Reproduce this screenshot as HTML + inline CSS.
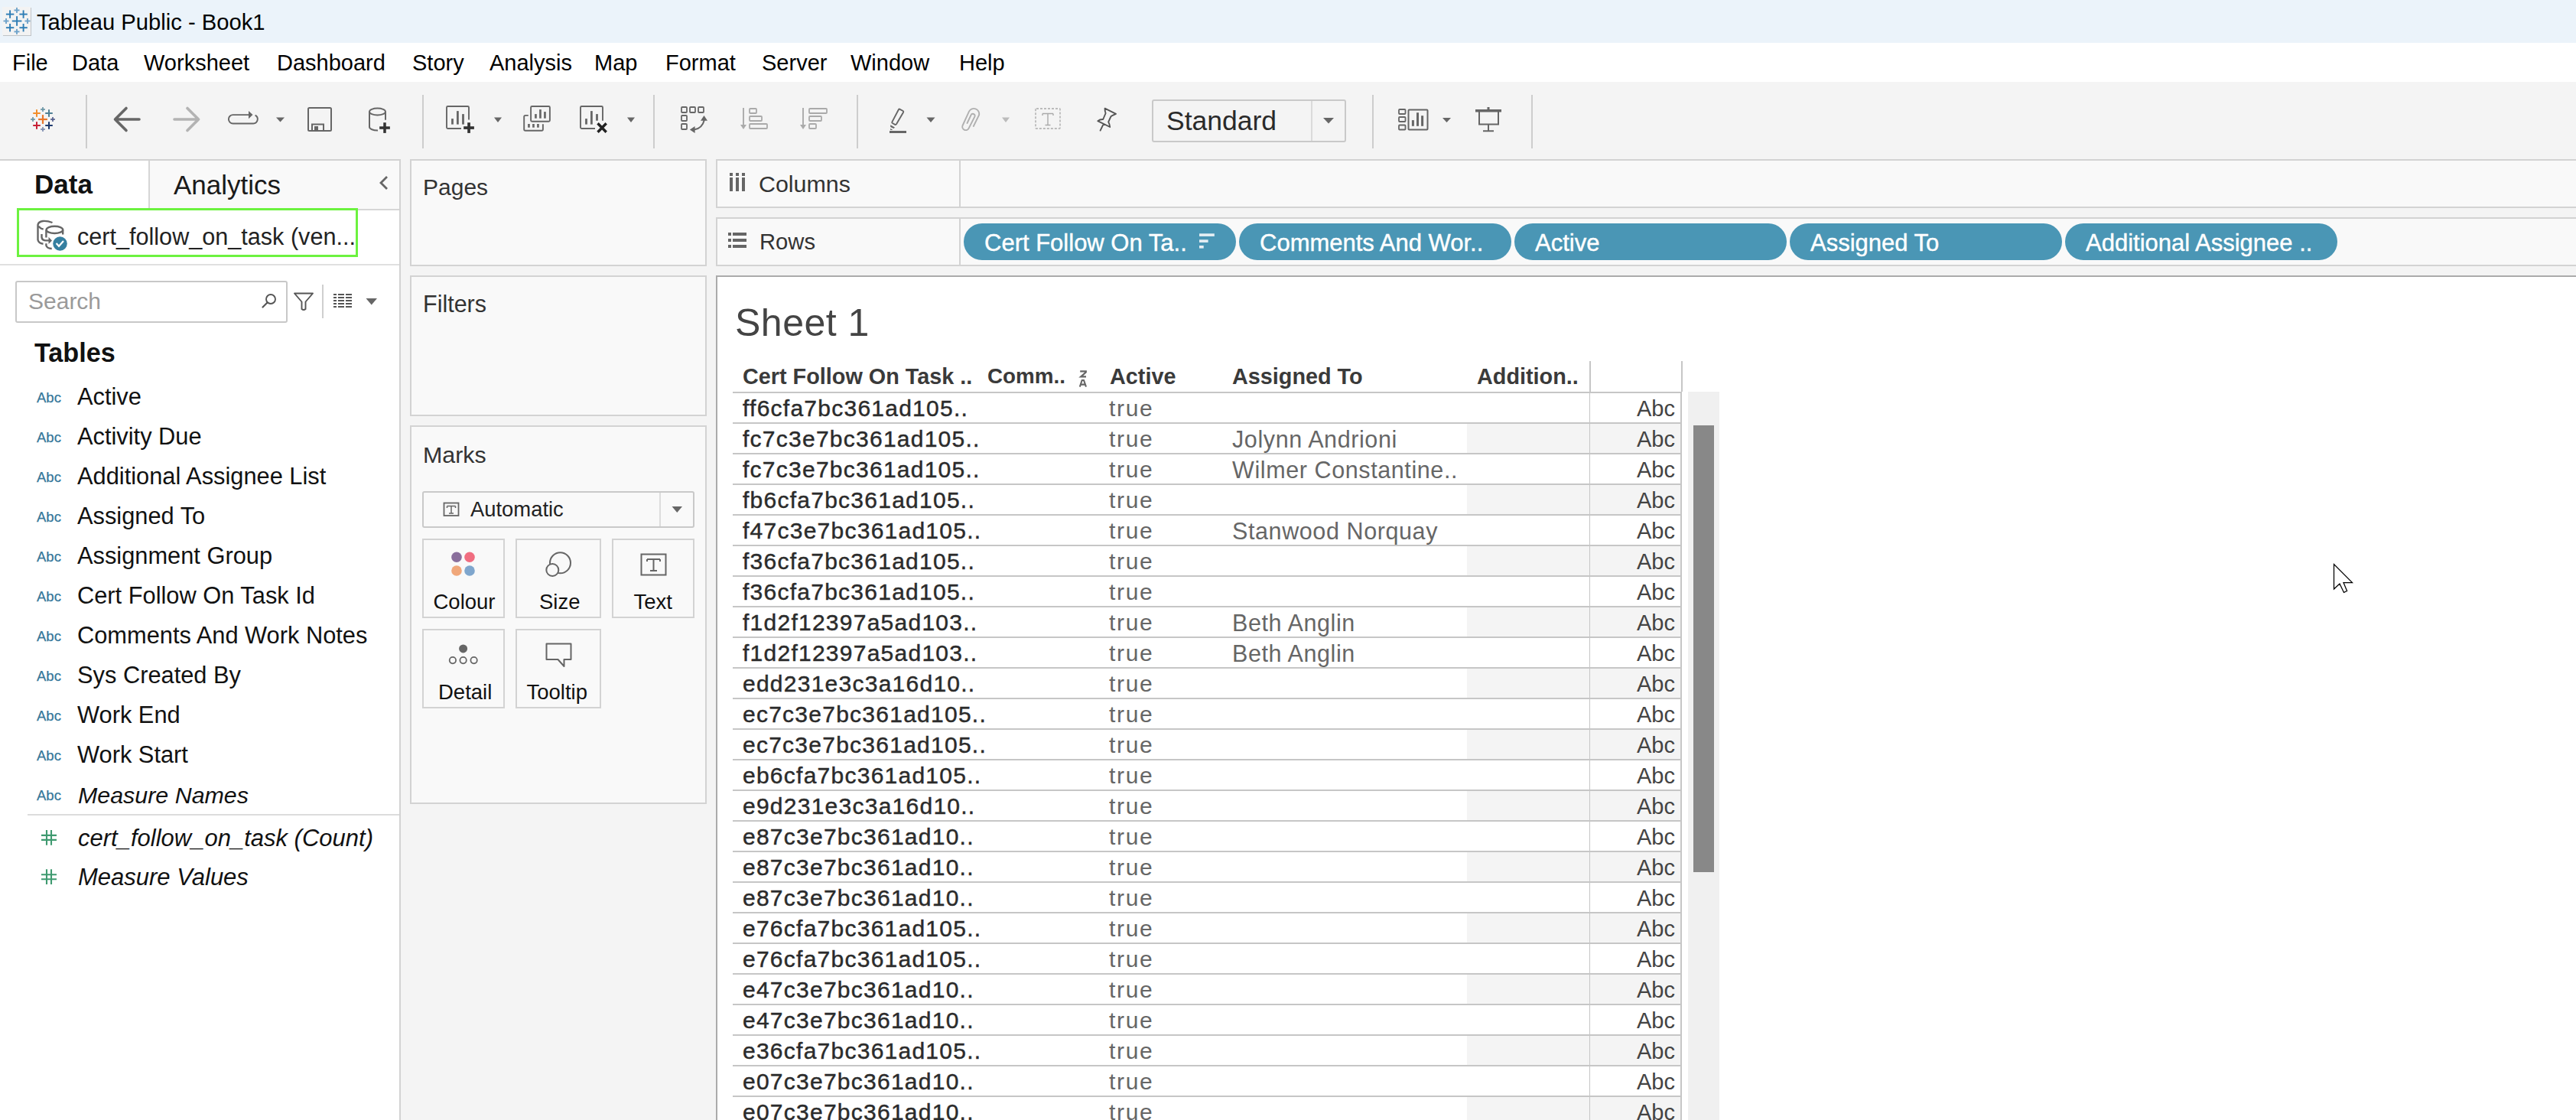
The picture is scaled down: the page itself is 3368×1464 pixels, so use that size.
<!DOCTYPE html>
<html><head><meta charset="utf-8"><style>
html,body{margin:0;padding:0;width:3368px;height:1464px;overflow:hidden;background:#F4F4F4;}
.t{position:absolute;line-height:1;white-space:pre;font-family:"Liberation Sans", sans-serif;}
</style></head><body>
<div style="position:absolute;left:0px;top:0px;width:3368px;height:56px;background:#EBF3FA;"></div><div style="position:absolute;left:0px;top:56px;width:3368px;height:51px;background:#FFFFFF;"></div><div style="position:absolute;left:0px;top:107px;width:3368px;height:1357px;background:#F4F4F4;"></div><div style="position:absolute;left:4px;top:10px;width:37px;height:37px;background:#BFC3C7;"></div><div style="position:absolute;left:3px;top:9px;width:37px;height:37px;background:#F3F3F3;"></div><div class="t" style="top:15.28px;font-size:29.2px;color:#000;left:48px;">Tableau Public - Book1</div><div class="t" style="top:67.95px;font-size:29px;color:#000;left:16px;">File</div><div class="t" style="top:67.95px;font-size:29px;color:#000;left:94px;">Data</div><div class="t" style="top:67.95px;font-size:29px;color:#000;left:188px;">Worksheet</div><div class="t" style="top:67.95px;font-size:29px;color:#000;left:362px;">Dashboard</div><div class="t" style="top:67.95px;font-size:29px;color:#000;left:539px;">Story</div><div class="t" style="top:67.95px;font-size:29px;color:#000;left:640px;">Analysis</div><div class="t" style="top:67.95px;font-size:29px;color:#000;left:777px;">Map</div><div class="t" style="top:67.95px;font-size:29px;color:#000;left:870px;">Format</div><div class="t" style="top:67.95px;font-size:29px;color:#000;left:996px;">Server</div><div class="t" style="top:67.95px;font-size:29px;color:#000;left:1112px;">Window</div><div class="t" style="top:67.95px;font-size:29px;color:#000;left:1254px;">Help</div><div style="position:absolute;left:112px;top:124px;width:2px;height:70px;background:#CDCDCD;"></div><div style="position:absolute;left:552px;top:124px;width:2px;height:70px;background:#CDCDCD;"></div><div style="position:absolute;left:854px;top:124px;width:2px;height:70px;background:#CDCDCD;"></div><div style="position:absolute;left:1120px;top:124px;width:2px;height:70px;background:#CDCDCD;"></div><div style="position:absolute;left:1794px;top:124px;width:2px;height:70px;background:#CDCDCD;"></div><div style="position:absolute;left:2002px;top:124px;width:2px;height:70px;background:#CDCDCD;"></div><div style="position:absolute;left:1506px;top:130px;width:254px;height:56px;background:#F4F4F4;border:2px solid #C9C9C9;box-sizing:border-box;border-radius:3px;"></div><div style="position:absolute;left:1714px;top:132px;width:2px;height:52px;background:#DADADA;"></div><div class="t" style="top:141.15px;font-size:35.5px;color:#2A2A2A;left:1525px;">Standard</div><div style="position:absolute;left:0px;top:208px;width:524px;height:1256px;background:#D2D2D2;"></div><div style="position:absolute;left:0px;top:210px;width:522px;height:1254px;background:#FFFFFF;"></div><div style="position:absolute;left:194px;top:210px;width:328px;height:65px;background:#D6D6D6;"></div><div style="position:absolute;left:196px;top:210px;width:326px;height:63px;background:#F9F9F9;"></div><div class="t" style="top:223.17px;font-size:35px;color:#111;font-weight:700;left:45px;">Data</div><div class="t" style="top:223.67px;font-size:35px;color:#1A1A1A;left:227px;">Analytics</div><div style="position:absolute;left:22px;top:272px;width:446px;height:64px;background:#FFFFFF;border:3px solid #6CF23F;box-sizing:border-box;"></div><div class="t" style="top:294.10px;font-size:30.6px;color:#222;left:101px;">cert_follow_on_task (ven...</div><div style="position:absolute;left:0px;top:345px;width:522px;height:2px;background:#E0E0E0;"></div><div style="position:absolute;left:20px;top:367px;width:356px;height:55px;background:#FFFFFF;border:2px solid #C8C8C8;box-sizing:border-box;border-radius:3px;"></div><div class="t" style="top:378.81px;font-size:30px;color:#9A9A9A;left:37px;">Search</div><div style="position:absolute;left:421px;top:372px;width:2px;height:44px;background:#CFCFCF;"></div><div class="t" style="top:443.65px;font-size:34.2px;color:#111;font-weight:700;left:45px;">Tables</div><div class="t" style="top:511.04px;font-size:18.5px;color:#35779A;left:48px;-webkit-text-stroke:0.25px #35779A;">Abc</div><div class="t" style="top:504.13px;font-size:30.8px;color:#111;left:101px;">Active</div><div class="t" style="top:563.04px;font-size:18.5px;color:#35779A;left:48px;-webkit-text-stroke:0.25px #35779A;">Abc</div><div class="t" style="top:556.13px;font-size:30.8px;color:#111;left:101px;">Activity Due</div><div class="t" style="top:615.04px;font-size:18.5px;color:#35779A;left:48px;-webkit-text-stroke:0.25px #35779A;">Abc</div><div class="t" style="top:608.13px;font-size:30.8px;color:#111;left:101px;">Additional Assignee List</div><div class="t" style="top:667.04px;font-size:18.5px;color:#35779A;left:48px;-webkit-text-stroke:0.25px #35779A;">Abc</div><div class="t" style="top:660.13px;font-size:30.8px;color:#111;left:101px;">Assigned To</div><div class="t" style="top:719.04px;font-size:18.5px;color:#35779A;left:48px;-webkit-text-stroke:0.25px #35779A;">Abc</div><div class="t" style="top:712.13px;font-size:30.8px;color:#111;left:101px;">Assignment Group</div><div class="t" style="top:771.04px;font-size:18.5px;color:#35779A;left:48px;-webkit-text-stroke:0.25px #35779A;">Abc</div><div class="t" style="top:764.13px;font-size:30.8px;color:#111;left:101px;">Cert Follow On Task Id</div><div class="t" style="top:823.04px;font-size:18.5px;color:#35779A;left:48px;-webkit-text-stroke:0.25px #35779A;">Abc</div><div class="t" style="top:816.13px;font-size:30.8px;color:#111;left:101px;">Comments And Work Notes</div><div class="t" style="top:875.04px;font-size:18.5px;color:#35779A;left:48px;-webkit-text-stroke:0.25px #35779A;">Abc</div><div class="t" style="top:868.13px;font-size:30.8px;color:#111;left:101px;">Sys Created By</div><div class="t" style="top:927.04px;font-size:18.5px;color:#35779A;left:48px;-webkit-text-stroke:0.25px #35779A;">Abc</div><div class="t" style="top:920.13px;font-size:30.8px;color:#111;left:101px;">Work End</div><div class="t" style="top:979.04px;font-size:18.5px;color:#35779A;left:48px;-webkit-text-stroke:0.25px #35779A;">Abc</div><div class="t" style="top:972.13px;font-size:30.8px;color:#111;left:101px;">Work Start</div><div class="t" style="top:1030.74px;font-size:18.5px;color:#35779A;left:48px;-webkit-text-stroke:0.25px #35779A;">Abc</div><div class="t" style="top:1024.17px;font-size:30.4px;color:#111;font-style:italic;left:102px;">Measure Names</div><div style="position:absolute;left:36px;top:1064px;width:486px;height:2px;background:#DCDCDC;"></div><div class="t" style="top:1079.66px;font-size:31px;color:#111;font-style:italic;left:102px;">cert_follow_on_task (Count)</div><div class="t" style="top:1130.96px;font-size:31px;color:#111;font-style:italic;left:102px;">Measure Values</div><div style="position:absolute;left:536px;top:208px;width:388px;height:140px;background:#F9F9F9;border:2px solid #D3D3D3;box-sizing:border-box;"></div><div class="t" style="top:230.20px;font-size:30px;color:#333;left:553px;">Pages</div><div style="position:absolute;left:536px;top:360px;width:388px;height:184px;background:#F9F9F9;border:2px solid #D3D3D3;box-sizing:border-box;"></div><div class="t" style="top:382.18px;font-size:30.5px;color:#333;left:553px;">Filters</div><div style="position:absolute;left:536px;top:556px;width:388px;height:495px;background:#F9F9F9;border:2px solid #D3D3D3;box-sizing:border-box;"></div><div class="t" style="top:578.67px;font-size:30.4px;color:#333;left:553px;">Marks</div><div style="position:absolute;left:552px;top:642px;width:356px;height:48px;background:#F9F9F9;border:2px solid #C9C9C9;box-sizing:border-box;border-radius:3px;"></div><div style="position:absolute;left:862px;top:644px;width:2px;height:44px;background:#DCDCDC;"></div><div class="t" style="top:652.11px;font-size:27.4px;color:#222;left:615px;">Automatic</div><div style="position:absolute;left:552px;top:704px;width:108px;height:104px;background:#F9F9F9;border:2px solid #D3D3D3;box-sizing:border-box;"></div><div style="position:absolute;left:674px;top:704px;width:112px;height:104px;background:#F9F9F9;border:2px solid #D3D3D3;box-sizing:border-box;"></div><div style="position:absolute;left:800px;top:704px;width:108px;height:104px;background:#F9F9F9;border:2px solid #D3D3D3;box-sizing:border-box;"></div><div style="position:absolute;left:552px;top:822px;width:108px;height:104px;background:#F9F9F9;border:2px solid #D3D3D3;box-sizing:border-box;"></div><div style="position:absolute;left:674px;top:822px;width:112px;height:104px;background:#F9F9F9;border:2px solid #D3D3D3;box-sizing:border-box;"></div><div class="t" style="top:773.22px;font-size:27.5px;color:#111;left:566.5px;">Colour</div><div class="t" style="top:773.22px;font-size:27.5px;color:#111;left:705px;">Size</div><div class="t" style="top:773.22px;font-size:27.5px;color:#111;left:828.5px;">Text</div><div class="t" style="top:890.72px;font-size:27.5px;color:#111;left:573px;">Detail</div><div class="t" style="top:890.72px;font-size:27.5px;color:#111;left:688.5px;">Tooltip</div><div style="position:absolute;left:936px;top:208px;width:2440px;height:64px;background:#F9F9F9;border:2px solid #D3D3D3;box-sizing:border-box;"></div><div style="position:absolute;left:1254px;top:210px;width:2px;height:60px;background:#D3D3D3;"></div><div style="position:absolute;left:936px;top:284px;width:2440px;height:64px;background:#F9F9F9;border:2px solid #D3D3D3;box-sizing:border-box;"></div><div style="position:absolute;left:1254px;top:286px;width:2px;height:60px;background:#D3D3D3;"></div><div class="t" style="top:224.97px;font-size:30.4px;color:#333;left:992px;">Columns</div><div class="t" style="top:302.18px;font-size:29.2px;color:#333;left:993px;">Rows</div><div style="position:absolute;left:1260px;top:292px;width:356px;height:48px;background:#4A96B5;border-radius:24px;"></div><div class="t" style="top:302.26px;font-size:31px;color:#FFFFFF;left:1287px;-webkit-text-stroke:0.4px #FFF;">Cert Follow On Ta..</div><div style="position:absolute;left:1620px;top:292px;width:356px;height:48px;background:#4A96B5;border-radius:24px;"></div><div class="t" style="top:302.26px;font-size:31px;color:#FFFFFF;left:1647px;-webkit-text-stroke:0.4px #FFF;">Comments And Wor..</div><div style="position:absolute;left:1980px;top:292px;width:356px;height:48px;background:#4A96B5;border-radius:24px;"></div><div class="t" style="top:302.26px;font-size:31px;color:#FFFFFF;left:2007px;-webkit-text-stroke:0.4px #FFF;">Active</div><div style="position:absolute;left:2340px;top:292px;width:356px;height:48px;background:#4A96B5;border-radius:24px;"></div><div class="t" style="top:302.26px;font-size:31px;color:#FFFFFF;left:2367px;-webkit-text-stroke:0.4px #FFF;">Assigned To</div><div style="position:absolute;left:2700px;top:292px;width:356px;height:48px;background:#4A96B5;border-radius:24px;"></div><div class="t" style="top:302.26px;font-size:31px;color:#FFFFFF;left:2727px;-webkit-text-stroke:0.4px #FFF;">Additional Assignee ..</div><div style="position:absolute;left:936px;top:360px;width:2432px;height:1104px;background:#ABABAB;"></div><div style="position:absolute;left:938px;top:362px;width:2430px;height:1102px;background:#FFFFFF;"></div><div class="t" style="top:396.68px;font-size:50px;color:#444;letter-spacing:0.5px;left:961px;">Sheet 1</div><div class="t" style="top:477.62px;font-size:28.8px;color:#3A3A3A;font-weight:700;left:971px;">Cert Follow On Task ..</div><div class="t" style="top:478.47px;font-size:27.8px;color:#3A3A3A;font-weight:700;left:1291px;">Comm..</div><div class="t" style="top:477.62px;font-size:28.8px;color:#3A3A3A;font-weight:700;left:1451px;">Active</div><div class="t" style="top:477.62px;font-size:28.8px;color:#3A3A3A;font-weight:700;left:1611px;">Assigned To</div><div class="t" style="top:477.62px;font-size:28.8px;color:#3A3A3A;font-weight:700;left:1931px;">Addition..</div><div style="position:absolute;left:2078px;top:472px;width:2px;height:40px;background:#C6C6C6;"></div><div style="position:absolute;left:2198px;top:472px;width:2px;height:40px;background:#C6C6C6;"></div><div class="t" style="top:519.11px;font-size:30px;color:#2B2B2B;letter-spacing:1.25px;left:971px;-webkit-text-stroke:0.45px #2B2B2B;">ff6cfa7bc361ad105..</div><div class="t" style="top:519.11px;font-size:30px;color:#666;letter-spacing:1.7px;left:1450px;">true</div><div class="t" style="top:519.95px;font-size:29px;color:#444;right:1178px;">Abc</div><div style="position:absolute;left:1918px;top:554px;width:160px;height:38px;background:#F4F4F4;"></div><div style="position:absolute;left:2079px;top:554px;width:118px;height:38px;background:#F4F4F4;"></div><div class="t" style="top:559.11px;font-size:30px;color:#2B2B2B;letter-spacing:1.25px;left:971px;-webkit-text-stroke:0.45px #2B2B2B;">fc7c3e7bc361ad105..</div><div class="t" style="top:559.11px;font-size:30px;color:#666;letter-spacing:1.7px;left:1450px;">true</div><div class="t" style="top:558.68px;font-size:30.5px;color:#666;letter-spacing:0.6px;left:1611px;">Jolynn Andrioni</div><div class="t" style="top:559.95px;font-size:29px;color:#444;right:1178px;">Abc</div><div class="t" style="top:599.11px;font-size:30px;color:#2B2B2B;letter-spacing:1.25px;left:971px;-webkit-text-stroke:0.45px #2B2B2B;">fc7c3e7bc361ad105..</div><div class="t" style="top:599.11px;font-size:30px;color:#666;letter-spacing:1.7px;left:1450px;">true</div><div class="t" style="top:598.68px;font-size:30.5px;color:#666;letter-spacing:0.6px;left:1611px;">Wilmer Constantine..</div><div class="t" style="top:599.95px;font-size:29px;color:#444;right:1178px;">Abc</div><div style="position:absolute;left:1918px;top:634px;width:160px;height:38px;background:#F4F4F4;"></div><div style="position:absolute;left:2079px;top:634px;width:118px;height:38px;background:#F4F4F4;"></div><div class="t" style="top:639.11px;font-size:30px;color:#2B2B2B;letter-spacing:1.25px;left:971px;-webkit-text-stroke:0.45px #2B2B2B;">fb6cfa7bc361ad105..</div><div class="t" style="top:639.11px;font-size:30px;color:#666;letter-spacing:1.7px;left:1450px;">true</div><div class="t" style="top:639.95px;font-size:29px;color:#444;right:1178px;">Abc</div><div class="t" style="top:679.11px;font-size:30px;color:#2B2B2B;letter-spacing:1.25px;left:971px;-webkit-text-stroke:0.45px #2B2B2B;">f47c3e7bc361ad105..</div><div class="t" style="top:679.11px;font-size:30px;color:#666;letter-spacing:1.7px;left:1450px;">true</div><div class="t" style="top:678.68px;font-size:30.5px;color:#666;letter-spacing:0.6px;left:1611px;">Stanwood Norquay</div><div class="t" style="top:679.95px;font-size:29px;color:#444;right:1178px;">Abc</div><div style="position:absolute;left:1918px;top:714px;width:160px;height:38px;background:#F4F4F4;"></div><div style="position:absolute;left:2079px;top:714px;width:118px;height:38px;background:#F4F4F4;"></div><div class="t" style="top:719.11px;font-size:30px;color:#2B2B2B;letter-spacing:1.25px;left:971px;-webkit-text-stroke:0.45px #2B2B2B;">f36cfa7bc361ad105..</div><div class="t" style="top:719.11px;font-size:30px;color:#666;letter-spacing:1.7px;left:1450px;">true</div><div class="t" style="top:719.95px;font-size:29px;color:#444;right:1178px;">Abc</div><div class="t" style="top:759.11px;font-size:30px;color:#2B2B2B;letter-spacing:1.25px;left:971px;-webkit-text-stroke:0.45px #2B2B2B;">f36cfa7bc361ad105..</div><div class="t" style="top:759.11px;font-size:30px;color:#666;letter-spacing:1.7px;left:1450px;">true</div><div class="t" style="top:759.95px;font-size:29px;color:#444;right:1178px;">Abc</div><div style="position:absolute;left:1918px;top:794px;width:160px;height:38px;background:#F4F4F4;"></div><div style="position:absolute;left:2079px;top:794px;width:118px;height:38px;background:#F4F4F4;"></div><div class="t" style="top:799.11px;font-size:30px;color:#2B2B2B;letter-spacing:1.25px;left:971px;-webkit-text-stroke:0.45px #2B2B2B;">f1d2f12397a5ad103..</div><div class="t" style="top:799.11px;font-size:30px;color:#666;letter-spacing:1.7px;left:1450px;">true</div><div class="t" style="top:798.68px;font-size:30.5px;color:#666;letter-spacing:0.6px;left:1611px;">Beth Anglin</div><div class="t" style="top:799.95px;font-size:29px;color:#444;right:1178px;">Abc</div><div class="t" style="top:839.11px;font-size:30px;color:#2B2B2B;letter-spacing:1.25px;left:971px;-webkit-text-stroke:0.45px #2B2B2B;">f1d2f12397a5ad103..</div><div class="t" style="top:839.11px;font-size:30px;color:#666;letter-spacing:1.7px;left:1450px;">true</div><div class="t" style="top:838.68px;font-size:30.5px;color:#666;letter-spacing:0.6px;left:1611px;">Beth Anglin</div><div class="t" style="top:839.95px;font-size:29px;color:#444;right:1178px;">Abc</div><div style="position:absolute;left:1918px;top:874px;width:160px;height:38px;background:#F4F4F4;"></div><div style="position:absolute;left:2079px;top:874px;width:118px;height:38px;background:#F4F4F4;"></div><div class="t" style="top:879.11px;font-size:30px;color:#2B2B2B;letter-spacing:1.25px;left:971px;-webkit-text-stroke:0.45px #2B2B2B;">edd231e3c3a16d10..</div><div class="t" style="top:879.11px;font-size:30px;color:#666;letter-spacing:1.7px;left:1450px;">true</div><div class="t" style="top:879.95px;font-size:29px;color:#444;right:1178px;">Abc</div><div class="t" style="top:919.11px;font-size:30px;color:#2B2B2B;letter-spacing:1.25px;left:971px;-webkit-text-stroke:0.45px #2B2B2B;">ec7c3e7bc361ad105..</div><div class="t" style="top:919.11px;font-size:30px;color:#666;letter-spacing:1.7px;left:1450px;">true</div><div class="t" style="top:919.95px;font-size:29px;color:#444;right:1178px;">Abc</div><div style="position:absolute;left:1918px;top:954px;width:160px;height:38px;background:#F4F4F4;"></div><div style="position:absolute;left:2079px;top:954px;width:118px;height:38px;background:#F4F4F4;"></div><div class="t" style="top:959.11px;font-size:30px;color:#2B2B2B;letter-spacing:1.25px;left:971px;-webkit-text-stroke:0.45px #2B2B2B;">ec7c3e7bc361ad105..</div><div class="t" style="top:959.11px;font-size:30px;color:#666;letter-spacing:1.7px;left:1450px;">true</div><div class="t" style="top:959.95px;font-size:29px;color:#444;right:1178px;">Abc</div><div class="t" style="top:999.11px;font-size:30px;color:#2B2B2B;letter-spacing:1.25px;left:971px;-webkit-text-stroke:0.45px #2B2B2B;">eb6cfa7bc361ad105..</div><div class="t" style="top:999.11px;font-size:30px;color:#666;letter-spacing:1.7px;left:1450px;">true</div><div class="t" style="top:999.95px;font-size:29px;color:#444;right:1178px;">Abc</div><div style="position:absolute;left:1918px;top:1034px;width:160px;height:38px;background:#F4F4F4;"></div><div style="position:absolute;left:2079px;top:1034px;width:118px;height:38px;background:#F4F4F4;"></div><div class="t" style="top:1039.11px;font-size:30px;color:#2B2B2B;letter-spacing:1.25px;left:971px;-webkit-text-stroke:0.45px #2B2B2B;">e9d231e3c3a16d10..</div><div class="t" style="top:1039.11px;font-size:30px;color:#666;letter-spacing:1.7px;left:1450px;">true</div><div class="t" style="top:1039.95px;font-size:29px;color:#444;right:1178px;">Abc</div><div class="t" style="top:1079.11px;font-size:30px;color:#2B2B2B;letter-spacing:1.25px;left:971px;-webkit-text-stroke:0.45px #2B2B2B;">e87c3e7bc361ad10..</div><div class="t" style="top:1079.11px;font-size:30px;color:#666;letter-spacing:1.7px;left:1450px;">true</div><div class="t" style="top:1079.95px;font-size:29px;color:#444;right:1178px;">Abc</div><div style="position:absolute;left:1918px;top:1114px;width:160px;height:38px;background:#F4F4F4;"></div><div style="position:absolute;left:2079px;top:1114px;width:118px;height:38px;background:#F4F4F4;"></div><div class="t" style="top:1119.11px;font-size:30px;color:#2B2B2B;letter-spacing:1.25px;left:971px;-webkit-text-stroke:0.45px #2B2B2B;">e87c3e7bc361ad10..</div><div class="t" style="top:1119.11px;font-size:30px;color:#666;letter-spacing:1.7px;left:1450px;">true</div><div class="t" style="top:1119.95px;font-size:29px;color:#444;right:1178px;">Abc</div><div class="t" style="top:1159.11px;font-size:30px;color:#2B2B2B;letter-spacing:1.25px;left:971px;-webkit-text-stroke:0.45px #2B2B2B;">e87c3e7bc361ad10..</div><div class="t" style="top:1159.11px;font-size:30px;color:#666;letter-spacing:1.7px;left:1450px;">true</div><div class="t" style="top:1159.95px;font-size:29px;color:#444;right:1178px;">Abc</div><div style="position:absolute;left:1918px;top:1194px;width:160px;height:38px;background:#F4F4F4;"></div><div style="position:absolute;left:2079px;top:1194px;width:118px;height:38px;background:#F4F4F4;"></div><div class="t" style="top:1199.11px;font-size:30px;color:#2B2B2B;letter-spacing:1.25px;left:971px;-webkit-text-stroke:0.45px #2B2B2B;">e76cfa7bc361ad105..</div><div class="t" style="top:1199.11px;font-size:30px;color:#666;letter-spacing:1.7px;left:1450px;">true</div><div class="t" style="top:1199.95px;font-size:29px;color:#444;right:1178px;">Abc</div><div class="t" style="top:1239.11px;font-size:30px;color:#2B2B2B;letter-spacing:1.25px;left:971px;-webkit-text-stroke:0.45px #2B2B2B;">e76cfa7bc361ad105..</div><div class="t" style="top:1239.11px;font-size:30px;color:#666;letter-spacing:1.7px;left:1450px;">true</div><div class="t" style="top:1239.95px;font-size:29px;color:#444;right:1178px;">Abc</div><div style="position:absolute;left:1918px;top:1274px;width:160px;height:38px;background:#F4F4F4;"></div><div style="position:absolute;left:2079px;top:1274px;width:118px;height:38px;background:#F4F4F4;"></div><div class="t" style="top:1279.11px;font-size:30px;color:#2B2B2B;letter-spacing:1.25px;left:971px;-webkit-text-stroke:0.45px #2B2B2B;">e47c3e7bc361ad10..</div><div class="t" style="top:1279.11px;font-size:30px;color:#666;letter-spacing:1.7px;left:1450px;">true</div><div class="t" style="top:1279.95px;font-size:29px;color:#444;right:1178px;">Abc</div><div class="t" style="top:1319.11px;font-size:30px;color:#2B2B2B;letter-spacing:1.25px;left:971px;-webkit-text-stroke:0.45px #2B2B2B;">e47c3e7bc361ad10..</div><div class="t" style="top:1319.11px;font-size:30px;color:#666;letter-spacing:1.7px;left:1450px;">true</div><div class="t" style="top:1319.95px;font-size:29px;color:#444;right:1178px;">Abc</div><div style="position:absolute;left:1918px;top:1354px;width:160px;height:38px;background:#F4F4F4;"></div><div style="position:absolute;left:2079px;top:1354px;width:118px;height:38px;background:#F4F4F4;"></div><div class="t" style="top:1359.11px;font-size:30px;color:#2B2B2B;letter-spacing:1.25px;left:971px;-webkit-text-stroke:0.45px #2B2B2B;">e36cfa7bc361ad105..</div><div class="t" style="top:1359.11px;font-size:30px;color:#666;letter-spacing:1.7px;left:1450px;">true</div><div class="t" style="top:1359.95px;font-size:29px;color:#444;right:1178px;">Abc</div><div class="t" style="top:1399.11px;font-size:30px;color:#2B2B2B;letter-spacing:1.25px;left:971px;-webkit-text-stroke:0.45px #2B2B2B;">e07c3e7bc361ad10..</div><div class="t" style="top:1399.11px;font-size:30px;color:#666;letter-spacing:1.7px;left:1450px;">true</div><div class="t" style="top:1399.95px;font-size:29px;color:#444;right:1178px;">Abc</div><div style="position:absolute;left:1918px;top:1434px;width:160px;height:38px;background:#F4F4F4;"></div><div style="position:absolute;left:2079px;top:1434px;width:118px;height:38px;background:#F4F4F4;"></div><div class="t" style="top:1439.11px;font-size:30px;color:#2B2B2B;letter-spacing:1.25px;left:971px;-webkit-text-stroke:0.45px #2B2B2B;">e07c3e7bc361ad10..</div><div class="t" style="top:1439.11px;font-size:30px;color:#666;letter-spacing:1.7px;left:1450px;">true</div><div class="t" style="top:1439.95px;font-size:29px;color:#444;right:1178px;">Abc</div><div style="position:absolute;left:958px;top:512px;width:1120px;height:2px;background:#C6C6C6;"></div><div style="position:absolute;left:2079px;top:512px;width:118px;height:2px;background:#C6C6C6;"></div><div style="position:absolute;left:958px;top:552px;width:1120px;height:2px;background:#C6C6C6;"></div><div style="position:absolute;left:2079px;top:552px;width:118px;height:2px;background:#C6C6C6;"></div><div style="position:absolute;left:958px;top:592px;width:1120px;height:2px;background:#C6C6C6;"></div><div style="position:absolute;left:2079px;top:592px;width:118px;height:2px;background:#C6C6C6;"></div><div style="position:absolute;left:958px;top:632px;width:1120px;height:2px;background:#C6C6C6;"></div><div style="position:absolute;left:2079px;top:632px;width:118px;height:2px;background:#C6C6C6;"></div><div style="position:absolute;left:958px;top:672px;width:1120px;height:2px;background:#C6C6C6;"></div><div style="position:absolute;left:2079px;top:672px;width:118px;height:2px;background:#C6C6C6;"></div><div style="position:absolute;left:958px;top:712px;width:1120px;height:2px;background:#C6C6C6;"></div><div style="position:absolute;left:2079px;top:712px;width:118px;height:2px;background:#C6C6C6;"></div><div style="position:absolute;left:958px;top:752px;width:1120px;height:2px;background:#C6C6C6;"></div><div style="position:absolute;left:2079px;top:752px;width:118px;height:2px;background:#C6C6C6;"></div><div style="position:absolute;left:958px;top:792px;width:1120px;height:2px;background:#C6C6C6;"></div><div style="position:absolute;left:2079px;top:792px;width:118px;height:2px;background:#C6C6C6;"></div><div style="position:absolute;left:958px;top:832px;width:1120px;height:2px;background:#C6C6C6;"></div><div style="position:absolute;left:2079px;top:832px;width:118px;height:2px;background:#C6C6C6;"></div><div style="position:absolute;left:958px;top:872px;width:1120px;height:2px;background:#C6C6C6;"></div><div style="position:absolute;left:2079px;top:872px;width:118px;height:2px;background:#C6C6C6;"></div><div style="position:absolute;left:958px;top:912px;width:1120px;height:2px;background:#C6C6C6;"></div><div style="position:absolute;left:2079px;top:912px;width:118px;height:2px;background:#C6C6C6;"></div><div style="position:absolute;left:958px;top:952px;width:1120px;height:2px;background:#C6C6C6;"></div><div style="position:absolute;left:2079px;top:952px;width:118px;height:2px;background:#C6C6C6;"></div><div style="position:absolute;left:958px;top:992px;width:1120px;height:2px;background:#C6C6C6;"></div><div style="position:absolute;left:2079px;top:992px;width:118px;height:2px;background:#C6C6C6;"></div><div style="position:absolute;left:958px;top:1032px;width:1120px;height:2px;background:#C6C6C6;"></div><div style="position:absolute;left:2079px;top:1032px;width:118px;height:2px;background:#C6C6C6;"></div><div style="position:absolute;left:958px;top:1072px;width:1120px;height:2px;background:#C6C6C6;"></div><div style="position:absolute;left:2079px;top:1072px;width:118px;height:2px;background:#C6C6C6;"></div><div style="position:absolute;left:958px;top:1112px;width:1120px;height:2px;background:#C6C6C6;"></div><div style="position:absolute;left:2079px;top:1112px;width:118px;height:2px;background:#C6C6C6;"></div><div style="position:absolute;left:958px;top:1152px;width:1120px;height:2px;background:#C6C6C6;"></div><div style="position:absolute;left:2079px;top:1152px;width:118px;height:2px;background:#C6C6C6;"></div><div style="position:absolute;left:958px;top:1192px;width:1120px;height:2px;background:#C6C6C6;"></div><div style="position:absolute;left:2079px;top:1192px;width:118px;height:2px;background:#C6C6C6;"></div><div style="position:absolute;left:958px;top:1232px;width:1120px;height:2px;background:#C6C6C6;"></div><div style="position:absolute;left:2079px;top:1232px;width:118px;height:2px;background:#C6C6C6;"></div><div style="position:absolute;left:958px;top:1272px;width:1120px;height:2px;background:#C6C6C6;"></div><div style="position:absolute;left:2079px;top:1272px;width:118px;height:2px;background:#C6C6C6;"></div><div style="position:absolute;left:958px;top:1312px;width:1120px;height:2px;background:#C6C6C6;"></div><div style="position:absolute;left:2079px;top:1312px;width:118px;height:2px;background:#C6C6C6;"></div><div style="position:absolute;left:958px;top:1352px;width:1120px;height:2px;background:#C6C6C6;"></div><div style="position:absolute;left:2079px;top:1352px;width:118px;height:2px;background:#C6C6C6;"></div><div style="position:absolute;left:958px;top:1392px;width:1120px;height:2px;background:#C6C6C6;"></div><div style="position:absolute;left:2079px;top:1392px;width:118px;height:2px;background:#C6C6C6;"></div><div style="position:absolute;left:958px;top:1432px;width:1120px;height:2px;background:#C6C6C6;"></div><div style="position:absolute;left:2079px;top:1432px;width:118px;height:2px;background:#C6C6C6;"></div><div style="position:absolute;left:958px;top:1472px;width:1120px;height:2px;background:#C6C6C6;"></div><div style="position:absolute;left:2079px;top:1472px;width:118px;height:2px;background:#C6C6C6;"></div><div style="position:absolute;left:2078px;top:512px;width:1px;height:952px;background:#C6C6C6;"></div><div style="position:absolute;left:2197px;top:512px;width:2px;height:952px;background:#C6C6C6;"></div><div style="position:absolute;left:2207px;top:512px;width:41px;height:952px;background:#F0F0F0;"></div><div style="position:absolute;left:2214px;top:556px;width:27px;height:584px;background:#888888;"></div>
<svg width="3368" height="1464" style="position:absolute;left:0;top:0"><rect x="15.8" y="26.55" width="12.6" height="1.9" fill="#2E7DB5"/><rect x="21.150000000000002" y="21.2" width="1.9" height="12.6" fill="#2E7DB5"/><rect x="7.8999999999999995" y="17.650000000000002" width="10.4" height="1.9" fill="#2E7DB5"/><rect x="12.15" y="13.400000000000002" width="1.9" height="10.4" fill="#2E7DB5"/><rect x="25.400000000000002" y="17.650000000000002" width="10.4" height="1.9" fill="#2E7DB5"/><rect x="29.650000000000002" y="13.400000000000002" width="1.9" height="10.4" fill="#2E7DB5"/><rect x="7.8999999999999995" y="35.25" width="10.4" height="1.9" fill="#2E7DB5"/><rect x="12.15" y="31.000000000000004" width="1.9" height="10.4" fill="#2E7DB5"/><rect x="25.400000000000002" y="35.25" width="10.4" height="1.9" fill="#2E7DB5"/><rect x="29.650000000000002" y="31.000000000000004" width="1.9" height="10.4" fill="#2E7DB5"/><rect x="18.5" y="12.450000000000001" width="7.0" height="1.9" fill="#6FA3CB"/><rect x="21.05" y="9.9" width="1.9" height="7.0" fill="#6FA3CB"/><rect x="4.5" y="26.55" width="7.0" height="1.9" fill="#6FA3CB"/><rect x="7.05" y="24.0" width="1.9" height="7.0" fill="#6FA3CB"/><rect x="32.5" y="26.55" width="7.0" height="1.9" fill="#6FA3CB"/><rect x="35.05" y="24.0" width="1.9" height="7.0" fill="#6FA3CB"/><rect x="18.5" y="40.449999999999996" width="7.0" height="1.9" fill="#6FA3CB"/><rect x="21.05" y="37.9" width="1.9" height="7.0" fill="#6FA3CB"/><rect x="50.1" y="154.9" width="11.8" height="2.2" fill="#E8762B"/><rect x="54.9" y="150.1" width="2.2" height="11.8" fill="#E8762B"/><rect x="43.2" y="147.0" width="9.6" height="2" fill="#F28E2B"/><rect x="47.0" y="143.2" width="2" height="9.6" fill="#F28E2B"/><rect x="59.2" y="147.0" width="9.6" height="2" fill="#4E7F94"/><rect x="63.0" y="143.2" width="2" height="9.6" fill="#4E7F94"/><rect x="53.1" y="142.1" width="5.8" height="1.8" fill="#6E98A8"/><rect x="55.1" y="140.1" width="1.8" height="5.8" fill="#6E98A8"/><rect x="40.1" y="155.1" width="5.8" height="1.8" fill="#6E98A8"/><rect x="42.1" y="153.1" width="1.8" height="5.8" fill="#6E98A8"/><rect x="66.1" y="155.1" width="5.8" height="1.8" fill="#59628F"/><rect x="68.1" y="153.1" width="1.8" height="5.8" fill="#59628F"/><rect x="43.2" y="163.0" width="9.6" height="2" fill="#C72035"/><rect x="47.0" y="159.2" width="2" height="9.6" fill="#C72035"/><rect x="59.2" y="163.0" width="9.6" height="2" fill="#1D3A6E"/><rect x="63.0" y="159.2" width="2" height="9.6" fill="#1D3A6E"/><rect x="53.1" y="168.1" width="5.8" height="1.8" fill="#7E8DB0"/><rect x="55.1" y="166.1" width="1.8" height="5.8" fill="#7E8DB0"/><path d="M182 156 H151 M165 141.5 L150.5 156 L165 170.5" stroke="#666" stroke-width="3.6" fill="none" stroke-linecap="round" stroke-linejoin="round"/><path d="M228 156 H259 M245 141.5 L259.5 156 L245 170.5" stroke="#B3B3B3" stroke-width="3.6" fill="none" stroke-linecap="round" stroke-linejoin="round"/><path d="M326 150.1 H304.6 A5.7 5.7 0 0 0 304.6 161.5 H331.2 A5.7 5.7 0 0 0 333.6 150.7" stroke="#666" stroke-width="1.9" fill="none"/><path d="M325 145 L330.5 150.1 L325 155.2 Z" fill="#666"/><path d="M361 153.5 L372 153.5 L366.5 159.5 Z" fill="#666"/><rect x="403" y="141" width="30" height="30" rx="1.5" stroke="#666" stroke-width="2" fill="none"/><path d="M408 171 V162.5 H423 V171" stroke="#666" stroke-width="2" fill="none"/><rect x="411" y="165" width="5" height="5.5" fill="#666"/><path d="M483 146 A10.5 4.5 0 0 1 504 146 A10.5 4.5 0 0 1 483 146 V166 A10.5 4.5 0 0 0 494 170.5 M504 146 V156.7" stroke="#666" stroke-width="2" fill="none"/><rect x="496.15" y="165.3" width="13.7" height="3.5" fill="#333"/><rect x="501.25" y="160.20000000000002" width="3.5" height="13.7" fill="#333"/><path d="M603 168 H585.5 Q584 168 584 166.5 V140.5 Q584 139 585.5 139 H611.5 Q613 139 613 140.5 V156.6" stroke="#666" stroke-width="1.9" fill="none"/><rect x="590.1" y="155.1" width="2.8" height="7.5" fill="#666"/><rect x="597" y="145.1" width="2.8" height="17.5" fill="#666"/><rect x="604.1" y="149.1" width="2.8" height="13.5" fill="#666"/><rect x="606.1999999999999" y="165.20000000000002" width="13.7" height="3.7" fill="#333"/><rect x="611.1999999999999" y="160.20000000000002" width="3.7" height="13.7" fill="#333"/><path d="M646 153.5 L656 153.5 L651.0 160 Z" fill="#666"/><path d="M690.8 150.9 H687 Q685.2 150.9 685.2 152.7 V169 Q685.2 170.8 687 170.8 H708.1 Q709.9 170.8 709.9 169 V162.2" stroke="#666" stroke-width="1.9" fill="none"/><rect x="694.1" y="139" width="24.8" height="19.8" rx="1.5" stroke="#666" stroke-width="1.9" fill="none"/><rect x="699.1" y="149.1" width="2.7" height="5.599999999999994" fill="#666"/><rect x="705.1" y="143.1" width="2.7" height="11.599999999999994" fill="#666"/><rect x="711.1" y="146.1" width="2.7" height="8.599999999999994" fill="#666"/><rect x="690.1" y="162" width="2.7" height="4.7" fill="#666"/><rect x="696.1" y="162" width="2.7" height="4.7" fill="#666"/><rect x="702.1" y="162" width="2.7" height="4.7" fill="#666"/><path d="M778 168 H760.5 Q759 168 759 166.5 V140.5 Q759 139 760.5 139 H786.5 Q788 139 788 140.5 V157.7" stroke="#666" stroke-width="1.9" fill="none"/><rect x="765.1" y="155.1" width="2.8" height="7.5" fill="#666"/><rect x="772" y="145.1" width="2.8" height="17.5" fill="#666"/><rect x="779.1" y="149.1" width="2.8" height="8.6" fill="#666"/><path d="M781.5 161.3 L792.7 172.8 M792.7 161.3 L781.5 172.8" stroke="#222" stroke-width="3.4"/><path d="M820 153.5 L830 153.5 L825.0 160 Z" fill="#666"/><rect x="891" y="140" width="7" height="7" rx="1" stroke="#666" stroke-width="1.8" fill="none"/><rect x="902" y="140" width="7" height="7" rx="1" stroke="#666" stroke-width="1.8" fill="none"/><rect x="913" y="140" width="7" height="7" rx="1" stroke="#666" stroke-width="1.8" fill="none"/><rect x="891" y="151" width="7" height="7" rx="1" stroke="#666" stroke-width="1.8" fill="none"/><rect x="891" y="162" width="7" height="7" rx="1" stroke="#666" stroke-width="1.8" fill="none"/><path d="M920.8 157 Q918.2 167.8 907.5 169.6" stroke="#666" stroke-width="2" fill="none"/><path d="M920.5 150.9 L925 157.8 L916 157.8 Z M901.9 169.5 L908.6 164.9 L908.6 173.9 Z" fill="#666"/><path d="M972 141 V166" stroke="#AAA" stroke-width="1.9"/><path d="M968 163 L972 169 L976 163 Z" fill="#AAA"/><rect x="980" y="142" width="9" height="6" rx="1" stroke="#AAA" stroke-width="1.8" fill="none"/><rect x="980" y="152" width="16" height="6" rx="1" stroke="#AAA" stroke-width="1.8" fill="none"/><rect x="980" y="162" width="23" height="6" rx="1" stroke="#AAA" stroke-width="1.8" fill="none"/><path d="M1050 141 V166" stroke="#AAA" stroke-width="1.9"/><path d="M1046 163 L1050 169 L1054 163 Z" fill="#AAA"/><rect x="1058" y="142" width="23" height="6" rx="1" stroke="#AAA" stroke-width="1.8" fill="none"/><rect x="1058" y="152" width="16" height="6" rx="1" stroke="#AAA" stroke-width="1.8" fill="none"/><rect x="1058" y="162" width="9" height="6" rx="1" stroke="#AAA" stroke-width="1.8" fill="none"/><path d="M1176.2 142.6 L1180.6 145 Q1181.6 145.7 1181.1 146.7 L1172 162.3 Q1171.3 163.3 1170.2 162.8 L1166.9 161 Q1165.9 160.4 1166.4 159.3 L1175 143 Q1175.5 142.2 1176.2 142.6 Z" stroke="#666" stroke-width="1.9" fill="none"/><path d="M1164.2 163.3 L1170 166.4 L1168.4 168.1 L1164.2 165.9 Z M1164.2 167.8 L1167.3 169.9 L1164.2 169.9 Z" fill="#666"/><rect x="1163" y="171" width="22" height="3" fill="#666"/><path d="M1211.5 153.5 L1222.5 153.5 L1217.0 160 Z" fill="#666"/><path d="M1264.5 161 L1269.5 150.5 A2.6 2.6 0 0 1 1274.4 152.4 L1266.8 167.4 A4.4 4.4 0 0 1 1258.6 164 L1267 145.6 A7 7 0 0 1 1280 150.5 L1272.8 165" stroke="#B0B0B0" stroke-width="1.9" fill="none" stroke-linecap="round"/><path d="M1310 153.5 L1320 153.5 L1315.0 160 Z" fill="#BBB"/><rect x="1354" y="142" width="32" height="26" rx="1" stroke="#BBB" stroke-width="1.8" fill="none" stroke-dasharray="3 2"/><path d="M1363 148.5 H1377 M1363 148.5 V151 M1377 148.5 V151 M1370 148.5 V163.5 M1366.5 163.5 H1373.5" stroke="#AAA" stroke-width="1.4" fill="none"/><path d="M1444.6 141.6 L1459 148.8 L1453.6 151.4 Q1452.6 151.8 1452.1 153 L1449.2 159.4 Q1450.9 162.6 1451.2 166 L1435.3 158.2 Q1438.2 155.8 1442.2 156 L1445.6 148 Q1444.4 145 1444.6 141.6 Z M1442.6 162.4 L1438.6 170.6" stroke="#555" stroke-width="1.9" fill="none" stroke-linejoin="round" stroke-linecap="round"/><path d="M1730 154 L1744 154 L1737.0 161.5 Z" fill="#666"/><rect x="1829" y="143" width="8.5" height="6" rx="1" stroke="#666" stroke-width="1.8" fill="none"/><rect x="1829" y="153" width="8.5" height="6" rx="1" stroke="#666" stroke-width="1.8" fill="none"/><rect x="1829" y="163.5" width="8.5" height="6" rx="1" stroke="#666" stroke-width="1.8" fill="none"/><rect x="1841.5" y="143.5" width="25" height="26" rx="1" stroke="#666" stroke-width="2" fill="none"/><rect x="1845.9" y="157.1" width="3" height="7.700000000000017" fill="#666"/><rect x="1852" y="147.2" width="3" height="17.600000000000023" fill="#666"/><rect x="1858.1" y="151.2" width="3" height="13.600000000000023" fill="#666"/><path d="M1886 154 L1897 154 L1891.5 160 Z" fill="#666"/><rect x="1929" y="143" width="34" height="3.5" fill="#666"/><rect x="1944.5" y="140" width="3" height="4" fill="#666"/><path d="M1934 146 V162.5 H1959 V146 M1946 162.5 V171 M1939 171.2 H1953" stroke="#666" stroke-width="2" fill="none"/><path d="M506 231 L498 239 L506 247" stroke="#666" stroke-width="2.8" fill="none"/><path d="M68.5 291 Q62 288.5 56 289 Q50 290 49.5 294 V313.5 Q50.5 318 56.5 318.8 M51 295.5 Q52 298.8 56.7 299.5" stroke="#666" stroke-width="2.4" fill="none"/><ellipse cx="71.4" cy="300.4" rx="10.8" ry="4.6" stroke="#666" stroke-width="2.4" fill="#FFF"/><path d="M60.4 300.4 V310.4 M82.2 300.4 V306.5 M54.5 306 V310 Q55 314.4 60 314.4 H64 M60.4 318.3 V321 Q61.5 324.8 67.7 325" stroke="#666" stroke-width="2.4" fill="none"/><path d="M63.5 309.8 L68 314.4 L63.5 319 Z" fill="#666"/><circle cx="78.5" cy="318.5" r="9.3" fill="#357FA0"/><path d="M73.6 318 L77 321.8 L83 315" stroke="#FFF" stroke-width="2.2" fill="none"/><circle cx="354" cy="391" r="6" stroke="#555" stroke-width="1.9" fill="none"/><path d="M349.5 395.5 L343.5 401.5" stroke="#555" stroke-width="2.2" stroke-linecap="round"/><path d="M385 383.5 H409 L399.5 394.5 V404 Q397 406 394.5 404 V394.5 Z" stroke="#555" stroke-width="1.9" fill="none" stroke-linejoin="round"/><rect x="436" y="384" width="4" height="2" fill="#555"/><rect x="442" y="384" width="8" height="2" fill="#555"/><rect x="452" y="384" width="8" height="2" fill="#555"/><rect x="436" y="388" width="4" height="2" fill="#555"/><rect x="442" y="388" width="8" height="2" fill="#555"/><rect x="452" y="388" width="8" height="2" fill="#555"/><rect x="436" y="392" width="4" height="2" fill="#555"/><rect x="442" y="392" width="8" height="2" fill="#555"/><rect x="452" y="392" width="8" height="2" fill="#555"/><rect x="436" y="396" width="4" height="2" fill="#555"/><rect x="442" y="396" width="8" height="2" fill="#555"/><rect x="452" y="396" width="8" height="2" fill="#555"/><rect x="436" y="400" width="4" height="2" fill="#555"/><rect x="442" y="400" width="8" height="2" fill="#555"/><rect x="452" y="400" width="8" height="2" fill="#555"/><path d="M478.5 390 L493 390 L485.75 398.5 Z" fill="#666"/><path d="M61 1084.9 V1104.7 M67 1084.9 V1104.7 M54 1091.9 H74 M54 1097.9 H74" stroke="#3F9A70" stroke-width="2.1" fill="none"/><path d="M61 1136.2 V1156.0 M67 1136.2 V1156.0 M54 1143.2 H74 M54 1149.2 H74" stroke="#3F9A70" stroke-width="2.1" fill="none"/><rect x="580.5" y="657.5" width="19" height="16.5" stroke="#666" stroke-width="1.8" fill="none"/><path d="M584.5 661.5 H595.5 M584.5 661.5 V664 M595.5 661.5 V664 M590 661.5 V671 M587 671 H593" stroke="#666" stroke-width="1.5" fill="none"/><path d="M878.5 662 L892 662 L885.25 670 Z" fill="#666"/><circle cx="597" cy="728.2" r="6.8" fill="#8A6F9C"/><circle cx="614" cy="728.2" r="6.8" fill="#F06D80"/><circle cx="597" cy="746" r="6.8" fill="#F0A77A"/><circle cx="614" cy="746" r="6.8" fill="#7FA6CD"/><circle cx="732.5" cy="735.8" r="13.5" stroke="#666" stroke-width="2" fill="none"/><circle cx="722.3" cy="745" r="8" stroke="#666" stroke-width="2" fill="#F9F9F9"/><rect x="838.5" y="724.5" width="32" height="27" stroke="#666" stroke-width="2" fill="none"/><path d="M846 731 H863 M846 731 V734 M863 731 V734 M854.5 731 V746 M850 746 H859" stroke="#666" stroke-width="2" fill="none"/><circle cx="605.6" cy="847.9" r="5.5" fill="#666"/><circle cx="591.9" cy="863.1" r="4.2" stroke="#666" stroke-width="1.8" fill="none"/><circle cx="605.6" cy="863.1" r="4.2" stroke="#666" stroke-width="1.8" fill="none"/><circle cx="619.6" cy="863.1" r="4.2" stroke="#666" stroke-width="1.8" fill="none"/><path d="M714.5 841.5 H746.5 V862 H737.5 V871 L729.5 862 H714.5 Z" stroke="#666" stroke-width="2" fill="none" stroke-linejoin="round"/><rect x="954" y="232" width="4" height="18" fill="#666"/><rect x="954" y="226" width="4" height="4" fill="#666"/><rect x="962" y="232" width="4" height="18" fill="#666"/><rect x="962" y="226" width="4" height="4" fill="#666"/><rect x="970" y="232" width="4" height="18" fill="#666"/><rect x="970" y="226" width="4" height="4" fill="#666"/><rect x="952" y="304" width="4" height="4" fill="#666"/><rect x="958" y="304" width="18" height="4" fill="#666"/><rect x="952" y="312" width="4" height="4" fill="#666"/><rect x="958" y="312" width="18" height="4" fill="#666"/><rect x="952" y="320" width="4" height="4" fill="#666"/><rect x="958" y="320" width="18" height="4" fill="#666"/><rect x="1568" y="305.3" width="19.8" height="3.6" fill="#E6EFF4"/><rect x="1568" y="313.3" width="11.6" height="3.6" fill="#E6EFF4"/><rect x="1568" y="321" width="5.7" height="3.6" fill="#E6EFF4"/><path d="M1412.2 485.3 H1419.8 V486.6 L1413.2 492.3 H1420" stroke="#666" stroke-width="2.2" fill="none" stroke-linejoin="miter"/><path d="M1411.8 505.6 L1414.7 497 H1417 L1420 505.6 M1413.4 502.6 H1418.4" stroke="#666" stroke-width="2.1" fill="none"/><path d="M3051.5 737.5 V770 L3059 763 L3064.5 774.5 L3068.6 772.4 L3064 761.5 H3075.5 Z" fill="#FFF" stroke="#000" stroke-width="1.25" stroke-linejoin="miter"/></svg>
</body></html>
